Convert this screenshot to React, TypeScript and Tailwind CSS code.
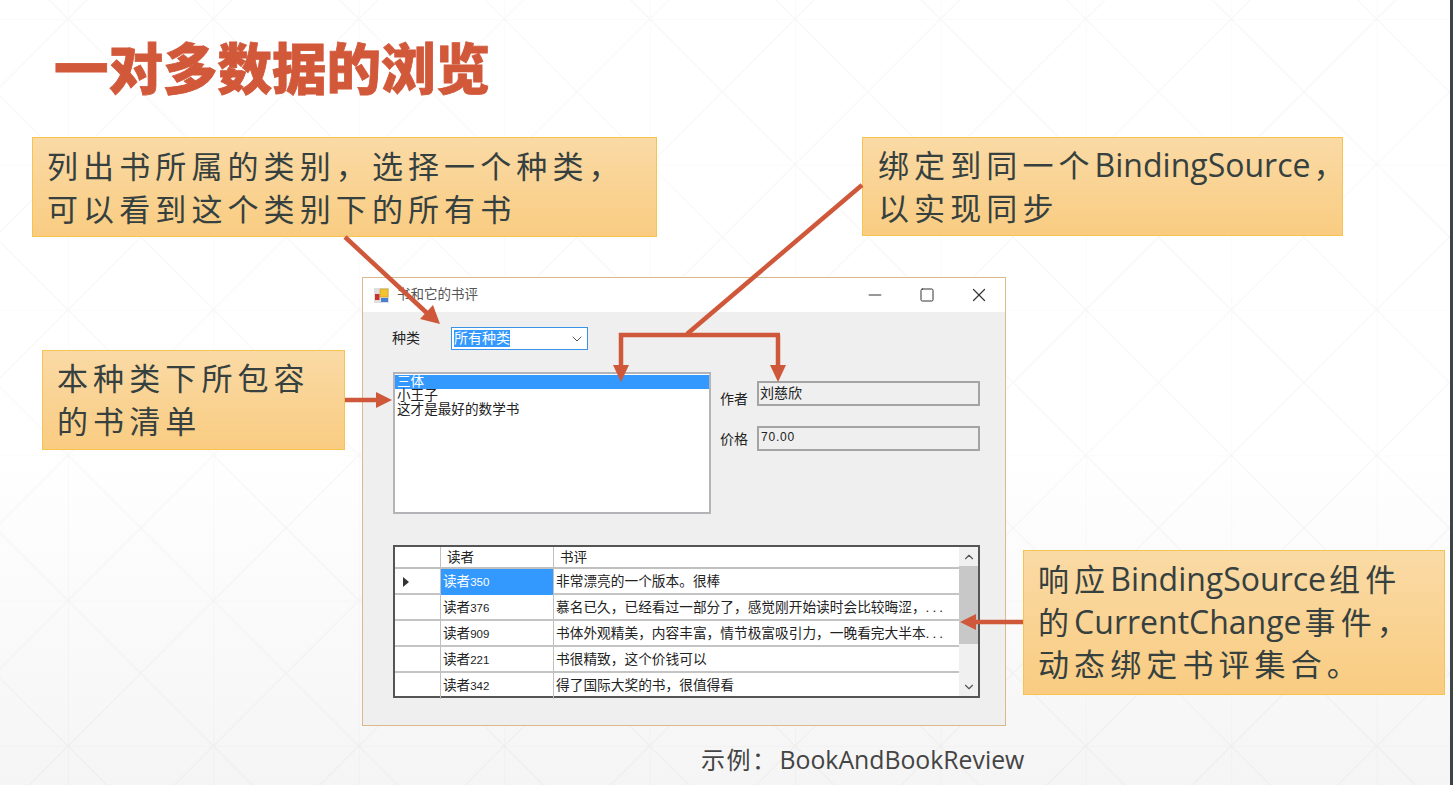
import { ChevronDown, ChevronUp, Minus, Square, X } from "lucide-react";
import type { ReactNode } from "react";

const CJK = "font-['Noto_Sans_CJK_SC',sans-serif]";
const UI = "font-['Liberation_Sans','Noto_Sans_CJK_SC',sans-serif]";

const reviews = [
  { reader: "读者350", text: "非常漂亮的一个版本。很棒", active: true },
  { reader: "读者376", text: "慕名已久，已经看过一部分了，感觉刚开始读时会比较晦涩，", more: true },
  { reader: "读者909", text: "书体外观精美，内容丰富，情节极富吸引力，一晚看完大半本", more: true },
  { reader: "读者221", text: "书很精致，这个价钱可以" },
  { reader: "读者342", text: "得了国际大奖的书，很值得看" },
];

function Backdrop() {
  return (
    <svg className="absolute inset-0 h-full w-full" aria-hidden="true">
      <defs>
        <pattern id="lattice" x="68" y="19" width="145.4" height="145.4" patternUnits="userSpaceOnUse">
          <path
            d="M0 0H145.4M0 0V145.4M0 0L145.4 145.4M145.4 0L0 145.4"
            fill="none"
            stroke="#000"
            strokeOpacity="0.03"
            strokeWidth="1.2"
          />
        </pattern>
      </defs>
      <rect width="100%" height="100%" fill="url(#lattice)" />
    </svg>
  );
}

function Arrows() {
  return (
    <svg className="pointer-events-none absolute inset-0 z-20 h-full w-full" aria-hidden="true">
      <g stroke="#d0583a" strokeWidth="4.5" fill="none">
        <path d="M345 237L428 314" />
        <path d="M862 185L687 334" />
        <path d="M780 335H621V370M778 335V370" />
        <path d="M345 400H380" />
        <path d="M1023 622H972" />
      </g>
      <g fill="#d0583a">
        <path d="M440 324L420 319L433 305Z" />
        <path d="M621 382L613 365H629Z" />
        <path d="M778 382L770 365H786Z" />
        <path d="M392 400L376 392V408Z" />
        <path d="M960 622L976 614V630Z" />
      </g>
    </svg>
  );
}

function Callout({ className, children }: { className: string; children: ReactNode }) {
  return (
    <div
      className={`absolute z-10 border border-[#f6c250] bg-gradient-to-b from-[#fadaa5] to-[#f9cc81] text-[#36413f] ${CJK} ${className}`}
    >
      {children}
    </div>
  );
}

function Line({ children }: { children: ReactNode }) {
  return <div className="h-[42.5px] whitespace-nowrap text-[31px] leading-[42px] tracking-[5.1px]">{children}</div>;
}

function Latin({ children }: { children: ReactNode }) {
  return <span className="mr-[3px] font-['Open_Sans',sans-serif] text-[32px] tracking-normal">{children}</span>;
}

function AppIcon() {
  return (
    <svg width="15" height="15" viewBox="0 0 15 15" aria-hidden="true">
      <rect x="0" y="0" width="15" height="15" fill="#dedede" />
      <rect x="6" y="1" width="8" height="8" fill="#f4c430" stroke="#c79a20" strokeWidth="0.6" />
      <rect x="1" y="6" width="4.5" height="6" fill="#c8342c" />
      <rect x="7" y="10" width="7" height="4" fill="#4a7fd0" />
    </svg>
  );
}

function WindowButton({ children }: { children: ReactNode }) {
  return <div className="flex w-[52px] justify-center text-[#333]">{children}</div>;
}

function FormWindow() {
  return (
    <div className={`absolute left-[362px] top-[277px] flex h-[449px] w-[644px] flex-col border border-[#dcb98a] bg-[#efefef] text-[#222] ${UI}`}>
      <div className="flex h-[34px] items-center bg-white pl-[11px]">
        <AppIcon />
        <span className="ml-2 text-[13.5px] text-[#555]">书和它的书评</span>
        <div className="ml-auto flex items-center">
          <WindowButton>
            <Minus size={20} strokeWidth={1.3} />
          </WindowButton>
          <WindowButton>
            <Square size={16} strokeWidth={1.5} />
          </WindowButton>
          <WindowButton>
            <X size={22} strokeWidth={1.3} />
          </WindowButton>
        </div>
      </div>

      <div className="ml-[29px] mt-[15px] flex h-[23px] items-center">
        <span className="w-[59px] text-[14px]">种类</span>
        <div className="flex h-[23px] w-[137px] items-center border border-[#3a93e6] bg-white pl-[2px] pr-[2px]">
          <span className="bg-[#3399ff] text-[14px] leading-[17px] text-white">所有种类</span>
          <ChevronDown className="ml-auto text-[#555]" size={16} strokeWidth={1.5} />
        </div>
      </div>

      <div className="ml-[30px] mt-[22px] flex">
        <div className="h-[142px] w-[318px] border-2 border-[#b4b4b8] bg-white pt-[1px] text-[13.6px] leading-[13.5px]">
          <div className="h-[14px] bg-[#3399ff] pl-[2px] text-white">三体</div>
          <div className="pl-[2px]">小王子</div>
          <div className="pl-[2px]">这才是最好的数学书</div>
        </div>
        <div className="ml-[9px] mt-[9px] grid grid-cols-[37px_223px] grid-rows-[25px_25px] items-center gap-y-[20px]">
          <span className="mt-[10px] text-[14px] leading-[20px]">作者</span>
          <div className="h-[25px] border-2 border-[#a4a4a4] pl-[1px] text-[14px] leading-[20px]">刘慈欣</div>
          <span className="text-[14px] leading-[20px]">价格</span>
          <div className="h-[25px] border-2 border-[#a4a4a4] pl-[2px] text-[12px] leading-[18px] tracking-[0.8px]">70.00</div>
        </div>
      </div>

      <div className="ml-[30px] mt-[31px] flex h-[153px] w-[587px] border-2 border-[#555] bg-white">
        <div className="flex min-w-0 flex-1 flex-col">
          <div className="grid h-[22px] grid-cols-[46px_113px_1fr] border-b-2 border-[#c0c0c0] text-[13.6px] leading-[22px]">
            <div className="border-r border-[#c0c0c0]" />
            <div className="border-r border-[#c0c0c0] pl-[6px]">读者</div>
            <div className="pl-[6px]">书评</div>
          </div>
          {reviews.map((row) => (
            <div
              key={row.reader}
              className="grid h-[26px] grid-cols-[46px_113px_1fr] border-b-2 border-[#c4c4c4] text-[13.7px] leading-[26px] last:border-b-0"
            >
              <div className="flex items-center border-r border-[#c0c0c0] pl-[8px]">
                {row.active && <div className="h-0 w-0 border-y-[5px] border-l-[6px] border-y-transparent border-l-[#333]" />}
              </div>
              <div className={`border-r border-[#c0c0c0] pl-[2px] text-[13.6px] ${row.active ? "bg-[#3399ff] text-white" : ""}`}>
                <span>{row.reader.slice(0, 2)}</span>
                <span className="text-[11.5px]">{row.reader.slice(2)}</span>
              </div>
              <div className="overflow-hidden whitespace-nowrap pl-[2px]">
                {row.text}
                {row.more && <span className="tracking-[3px]">...</span>}
              </div>
            </div>
          ))}
        </div>
        <div className="flex w-[19px] flex-col items-center bg-[#f0f0f0]">
          <ChevronUp className="mt-[3px] text-[#555]" size={14} strokeWidth={2} />
          <div className="mt-[2px] h-[78px] w-full bg-[#c8c8c8]" />
          <ChevronDown className="mb-[2px] mt-auto text-[#555]" size={14} strokeWidth={2} />
        </div>
      </div>
    </div>
  );
}

export default function App() {
  return (
    <div className="relative h-[785px] w-[1453px] overflow-hidden bg-white">
      <div className="absolute inset-x-0 bottom-0 h-[335px] bg-gradient-to-b from-white to-[#f5f5f5]" />
      <Backdrop />

      <h1 className={`absolute left-[54px] top-[27px] text-[54.5px] font-black leading-[78px] text-[#d2583a] [-webkit-text-stroke:0.8px_#d2583a] ${CJK}`}>
        一对多数据的浏览
      </h1>

      <Callout className="left-[32px] top-[137px] h-[100px] w-[625px] pl-[14px] pt-[6px]">
        <Line>列出书所属的类别，选择一个种类，</Line>
        <Line>可以看到这个类别下的所有书</Line>
      </Callout>

      <Callout className="left-[862px] top-[137px] h-[99px] w-[481px] pl-[15px] pt-[5px]">
        <Line>
          绑定到同一个<Latin>BindingSource</Latin>，
        </Line>
        <Line>以实现同步</Line>
      </Callout>

      <Callout className="left-[42px] top-[350px] h-[100px] w-[303px] pl-[14px] pt-[5px]">
        <Line>本种类下所包容</Line>
        <Line>的书清单</Line>
      </Callout>

      <Callout className="left-[1023px] top-[550px] h-[145px] w-[422px] pl-[14px] pt-[6px]">
        <Line>
          响应<Latin>BindingSource</Latin>组件
        </Line>
        <Line>
          的<Latin>CurrentChange</Latin>事件，
        </Line>
        <Line>动态绑定书评集合。</Line>
      </Callout>

      <FormWindow />
      <Arrows />

      <p className={`absolute left-[701px] top-[742px] whitespace-nowrap text-[24px] leading-[34px] tracking-[1.5px] text-[#444] ${CJK}`}>
        示例：
        <span className="ml-[2px] font-['Open_Sans',sans-serif] text-[24.8px] tracking-normal">BookAndBookReview</span>
      </p>

      <div className="absolute inset-y-0 right-0 w-[3px] bg-[#3f4448]" />
    </div>
  );
}
